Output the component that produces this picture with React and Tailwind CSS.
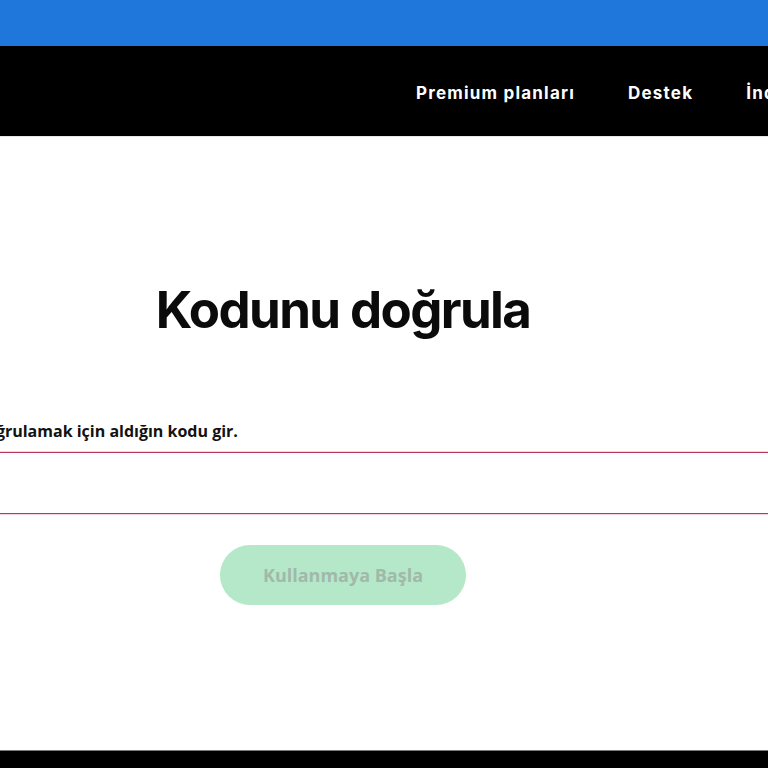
export default function App() {
  return (
    <div className="w-[768px] h-[768px] overflow-hidden bg-white flex flex-col">
      {/* top notice strip */}
      <div className="h-[46px] shrink-0 bg-[#1f77dc]" />

      {/* site navigation */}
      <header className="h-[91px] shrink-0 bg-black border-b border-[#e6e6e6] flex items-center pl-[416px] overflow-hidden">
        <nav
          className="flex items-center gap-[53px] text-white text-[17px] font-bold whitespace-nowrap pt-[5px]"
          style={{ fontFamily: "Inter, 'Noto Sans', sans-serif", letterSpacing: "1.2px" }}
        >
          <a>Premium planları</a>
          <a>Destek</a>
          <a>İndir</a>
        </nav>
      </header>

      {/* verification form */}
      <main className="flex-1 flex flex-col">
        <div className="w-[900px] ml-[-107px] flex flex-col items-center pt-[143px]">
          <h1
            className="text-[51px] leading-[60px] font-bold text-[#0b0b0b] tracking-[-1.6px]"
            style={{ fontFamily: "Inter, 'Noto Sans', sans-serif" }}
          >
            Kodunu doğrula
          </h1>

          <div className="self-stretch mt-[80px] flex flex-col">
            <label
              className="text-[16px] leading-[22px] font-bold text-[#121212] pl-[9px] whitespace-nowrap"
              style={{ fontFamily: "'Open Sans', 'Noto Sans', sans-serif" }}
            >
              Hesabını doğrulamak için aldığın kodu gir.
            </label>
            <input
              type="text"
              className="mt-[10px] h-[62px] w-full border border-[#b8385a] shadow-[0_0_0_1px_#f7d3dc] bg-white outline-none"
            />
          </div>

          <button
            className="mt-[31px] w-[246px] h-[60px] rounded-full bg-[#b4e8c9] text-[#a0b9a9] text-[18px] font-bold"
            style={{ fontFamily: "'Open Sans', 'Noto Sans', sans-serif" }}
          >
            Kullanmaya Başla
          </button>
        </div>
      </main>

      {/* footer */}
      <footer className="h-[18px] shrink-0 bg-black border-t border-[#7a7a7a]" />
    </div>
  );
}
